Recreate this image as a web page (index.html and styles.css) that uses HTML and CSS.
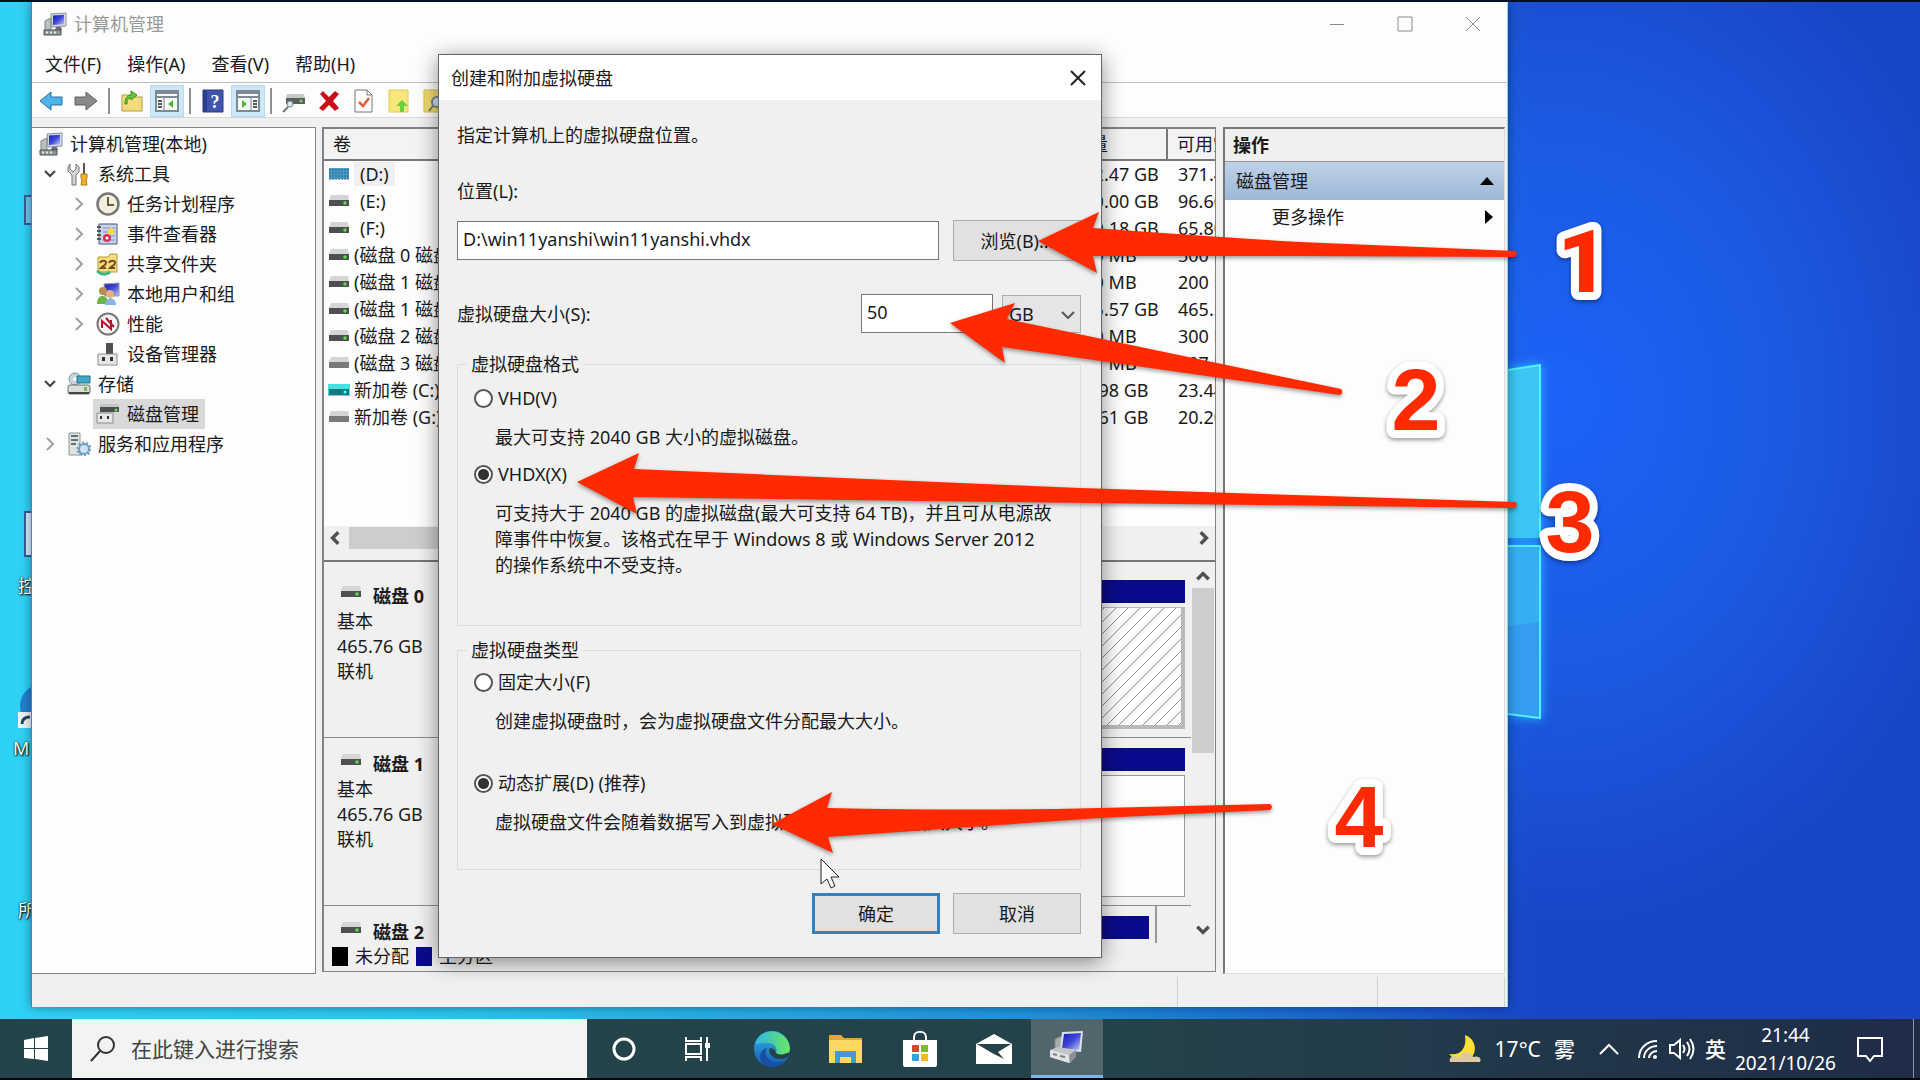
FILE: index.html
```html
<!DOCTYPE html>
<html lang="zh-CN">
<head>
  <title>计算机管理</title>
  <meta charset="UTF-8" />
  <link rel="stylesheet" href="styles.css">
</head>
<body>
  <!-- icon sprites -->
  <svg class="sprites" width="0" height="0">
    <defs>
      <linearGradient id="screen" x1="0" y1="0" x2="1" y2="1">
        <stop offset="0" stop-color="#1a1fb8" />
        <stop offset=".5" stop-color="#3f48d8" />
        <stop offset="1" stop-color="#c4cbf7" />
      </linearGradient>
      <linearGradient id="edgeBlue" x1="0" y1="0" x2="0" y2="1">
        <stop offset="0" stop-color="#35b8e6" />
        <stop offset="1" stop-color="#1058b0" />
      </linearGradient>
      <linearGradient id="edgeGreen" x1="0" y1="0" x2="1" y2="0">
        <stop offset="0" stop-color="#2fb4ea" />
        <stop offset="1" stop-color="#6be85c" />
      </linearGradient>
      <pattern id="hatch" width="12" height="12" patternUnits="userSpaceOnUse">
        <path d="M-2 14 14 -2M-2 2 2 -2M10 14 14 10" stroke="#8e8e8e" stroke-width="1" />
      </pattern>
    </defs>
    <symbol id="i-computer" viewBox="0 0 24 24">
      <path d="M2 9l6-3v12l-6 1z" fill="#b9bfc2" stroke="#7b8286" />
      <path d="M8 2l15-1v13l-14 1z" fill="#d9dce6" stroke="#8b90a3" />
      <path d="M10 3.500l11-.7v9.500l-11 .8z" fill="url(#screen)" />
      <path d="M13 15h5l1 3h-7z" fill="#6b7074" />
      <path d="M1 18h17v5H1z" fill="#8e9598" stroke="#4f5659" />
      <path d="M3 20.500h2m2 0h2m2 0h2" stroke="#e5e5e5" stroke-width="2" />
    </symbol>
    <symbol id="i-mmc" viewBox="0 0 36 36">
      <path d="M6 10l7-3v16l-7 2z" fill="#a9adaf" stroke="#7f8688" />
      <path d="M13 3l21-1-2 21-21-2z" fill="#dfe2ea" />
      <path d="M15 5l17-1-2 17-17-2z" fill="url(#screen)" />
      <path d="M15 19l5 1-2 5-4-1z" fill="#24323a" />
      <path d="M1 21l8-3 18 3v6l-6 7-20-6z" fill="#c3c6c8" />
      <path d="M1 21l19 5v8L1 28z" fill="#e1e3e4" />
      <path d="M20 26l7-5v6l-6 7z" fill="#8c9194" />
      <path d="M4 25l4 1m3 1 5 1" stroke="#7a8083" stroke-width="2" />
    </symbol>
    <symbol id="i-tools" viewBox="0 0 24 24">
      <path d="M3 2v5l3 3 3-3V2l3 3v5l-3 3v10H5V13L1 9V5z" fill="#d3d5d6" stroke="#777" />
      <path d="M16 1h2v11h-2z" fill="#555" />
      <path d="M14 12h6v4l-1 2 1 5h-6l1-5-1-2z" fill="#f0b32c" stroke="#b07a12" />
    </symbol>
    <symbol id="i-clock" viewBox="0 0 24 24">
      <circle cx="12" cy="12" r="10.500" fill="#f2efe0" stroke="#777" stroke-width="2.500" />
      <path d="M12 5v8h6" fill="none" stroke="#665c3d" stroke-width="2" />
    </symbol>
    <symbol id="i-events" viewBox="0 0 24 24">
      <path d="M3 2h18v20H3z" fill="#c9d3ea" stroke="#44567f" />
      <path d="M1 5h4M1 9h4M1 13h4M1 17h4" stroke="#555" stroke-width="2" />
      <path d="M7 6h12M7 10h12M7 14h12M7 18h12" stroke="#7c8fbd" />
      <path d="M15 4l4 8h-8z" fill="#ffd83a" />
      <circle cx="11" cy="16" r="4" fill="#d2315d" />
      <circle cx="11" cy="16" r="1.500" fill="#fff" />
    </symbol>
    <symbol id="i-share" viewBox="0 0 24 24">
      <path d="M2 5h10l2-3h7v18H2z" fill="#f4dd7b" stroke="#b99a32" />
      <path d="M4 11c1-3 6-3 6 0 0 2-3 3-5 5h5" fill="none" stroke="#7d4a22" stroke-width="2" />
      <path d="M13 11c1-3 6-3 6 0 0 2-3 3-5 5h5" fill="none" stroke="#7d4a22" stroke-width="2" />
      <path d="M1 19c4 4 9 4 13 1" fill="none" stroke="#3fb57e" stroke-width="3" />
    </symbol>
    <symbol id="i-users" viewBox="0 0 24 24">
      <path d="M8 2l15-1v13H9z" fill="url(#screen)" stroke="#999" />
      <circle cx="7" cy="9" r="4" fill="#b98a52" />
      <circle cx="14" cy="12" r="4" fill="#e0b27d" />
      <path d="M1 22c0-11 11-11 11 0z" fill="#6bb545" />
      <path d="M9 23c0-9 11-9 11 0z" fill="#89b4dd" />
    </symbol>
    <symbol id="i-perf" viewBox="0 0 24 24">
      <circle cx="12" cy="12" r="10.500" fill="#f4f4f4" stroke="#777" stroke-width="2" />
      <path d="M6 16V9l9 8V8M10 6l8 9" fill="none" stroke="#b4132c" stroke-width="2" />
    </symbol>
    <symbol id="i-device" viewBox="0 0 24 24">
      <path d="M10 1h7v11h-7z" fill="#4b4f52" />
      <path d="M2 12h19v11H2z" fill="#e4e6e7" stroke="#8b8f91" />
      <path d="M6 15h3v4H6zM14 15h3v4h-3z" fill="#333" />
    </symbol>
    <symbol id="i-storage" viewBox="0 0 24 24">
      <circle cx="8" cy="7" r="6" fill="#c6d3da" stroke="#84959d" />
      <circle cx="8" cy="7" r="2" fill="#fff" />
      <path d="M10 4h13v7H10z" fill="#43a6c9" stroke="#2b6f88" />
      <rect x="1" y="13" width="22" height="9" rx="2" fill="#d9dcdd" stroke="#6b7072" />
      <path d="M2 21h20" stroke="#444" stroke-width="2" />
      <path d="M17 15h3v4h-3z" fill="#6fbf4c" />
    </symbol>
    <symbol id="i-diskmgmt" viewBox="0 0 24 24">
      <path d="M4 4h19v6H4z" fill="#4b5150" />
      <path d="M4 2h18l1 3H4z" fill="#c2c6c6" />
      <circle cx="20" cy="8" r="1.500" fill="#6be04d" />
      <path d="M1 11h16v10H1z" fill="#e6e8e8" stroke="#8a8d8d" />
      <path d="M4 14h2v3H4zM11 14h2v3h-2z" fill="#333" />
    </symbol>
    <symbol id="i-services" viewBox="0 0 24 24">
      <path d="M2 1h11v22H2z" fill="#dfe3e3" stroke="#8d9698" />
      <path d="M4 4h7M4 8h7M4 12h5" stroke="#66706f" stroke-width="2" />
      <circle cx="17" cy="17" r="5" fill="#cfe0ee" stroke="#6f9cc0" stroke-width="2" />
      <circle cx="17" cy="17" r="6.500" fill="none" stroke="#6f9cc0" stroke-width="2" stroke-dasharray="2 2" />
    </symbol>
    <symbol id="i-drive" viewBox="0 0 22 14">
      <path d="M3 1h17l1 5H1z" fill="#d4d6d6" />
      <path d="M1 6h20v6H1z" fill="#4c504f" />
      <circle cx="17" cy="9" r="1.700" fill="#5fe04a" />
    </symbol>
    <symbol id="i-drive-off" viewBox="0 0 22 14">
      <path d="M3 1h17l1 5H1z" fill="#d4d6d6" />
      <path d="M1 6h20v6H1z" fill="#77797a" />
    </symbol>
    <symbol id="i-drive-sys" viewBox="0 0 22 14">
      <path d="M0 1h22v12H0z" fill="#49e0e4" />
      <path d="M1 6h20v6H1z" fill="#13797b" />
      <circle cx="17" cy="9" r="1.500" fill="#5ff" />
    </symbol>
    <symbol id="i-drive-sel" viewBox="0 0 22 14">
      <path d="M1 1h20v11H1z" fill="#4a9cc4" />
      <path d="M1 3h20M1 6h20M1 9h20M1 12h20" stroke="#1c5f8c" stroke-dasharray="2 1" />
    </symbol>
    <symbol id="i-down" viewBox="0 0 14 14"><path d="M2 4l5 5 5-5" fill="none" stroke="#404040" stroke-width="2" /></symbol>
    <symbol id="i-right" viewBox="0 0 14 14"><path d="M4 1l6 6-6 6" fill="none" stroke="#a0a0a0" stroke-width="2" /></symbol>
    <symbol id="i-panel" viewBox="0 0 24 24">
      <path d="M1 2h22v20H1z" fill="#f7f7f7" stroke="#7d8a92" stroke-width="2" />
      <path d="M1 4h22M1 8h22" stroke="#7d8a92" stroke-width="2" />
      <path d="M9 9v13" stroke="#7d8a92" />
      <path d="M3 12h4M3 15h4M3 18h4" stroke="#555" stroke-width="2" />
      <path d="M18 11v8l-5-4z" fill="#55b83a" />
    </symbol>
  </svg>

  <main class="desktop">
    <svg class="wallpaper-light" viewBox="0 0 34 356">
      <path d="M0 6 32 1v173H0z" fill="#3cc6f5" />
      <path d="M0 182h32v172L0 350z" fill="#36aef3" />
      <path d="M0 262 32 258v96L0 350z" fill="#359df0" />
      <path d="M0 6 32 1v173M0 182h32v172L0 350" fill="none" stroke="#4ff0fb" stroke-width="2" />
    </svg>
    <svg class="desk-pc" viewBox="0 0 48 30"><path d="M1 1h46v28H1z" fill="#6fc8ee" stroke="#3a5c9a" stroke-width="2" /></svg>
    <svg class="desk-panel" viewBox="0 0 48 46"><path d="M1 1h46v44H1z" fill="#d6ecf8" stroke="#3a5c9a" stroke-width="2" /></svg>
    <div class="desk-item desk-control">控</div>
    <svg class="desk-edge" viewBox="0 0 48 48"><circle cx="24" cy="24" r="22" fill="#2380d0" /><path d="M0 30h16v16H0z" fill="#f4f4f4" /><path d="M4 42c0-5 3-7 8-7" fill="none" stroke="#246" stroke-width="3" /></svg>
    <div class="desk-item desk-ms">M</div>
    <div class="desk-item desk-all">所</div>

    <section class="window">
      <header class="titlebar">
        <svg class="icon"><use href="#i-computer" /></svg>
        <span class="title">计算机管理</span>
        <button class="win-btn" aria-label="最小化"><svg width="16" height="16"><path d="M1 8.500h14" /></svg></button>
        <button class="win-btn" aria-label="最大化"><svg width="16" height="16"><path d="M1 1h14v14H1z" /></svg></button>
        <button class="win-btn" aria-label="关闭"><svg width="16" height="16"><path d="M1 1l14 14M15 1 1 15" /></svg></button>
      </header>
      <nav class="menubar">
        <button>文件(F)</button>
        <button>操作(A)</button>
        <button>查看(V)</button>
        <button>帮助(H)</button>
      </nav>
      <div class="toolbar">
        <button aria-label="后退"><svg class="icon" viewBox="0 0 24 24"><path d="M1 12 12 3v5h11v8H12v5z" fill="#4fb3ea" stroke="#2a6f9e" /></svg></button>
        <button aria-label="前进"><svg class="icon" viewBox="0 0 24 24"><path d="M23 12 12 3v5H1v8h11v5z" fill="#8a8a8a" stroke="#5e5e5e" /></svg></button>
        <i class="sep"></i>
        <button aria-label="向上一级"><svg class="icon" viewBox="0 0 24 24"><path d="M2 6h9l2 2h9v14H2z" fill="#f2dc7d" stroke="#b99b3d" /><path d="M5 15c0-7 3-9 6-9V2l6 4-6 5V9c-3 0-4 2-4 6z" fill="#66c93d" stroke="#3b8f22" /></svg></button>
        <button class="on" aria-label="显示控制台树"><svg class="icon"><use href="#i-panel" /></svg></button>
        <i class="sep"></i>
        <button aria-label="帮助"><svg class="icon" viewBox="0 0 24 24"><path d="M2 1h20v22H2z" fill="#3f55ac" stroke="#2b3a78" /><path d="M2 1h4v22H2z" fill="#2d3f8c" /><text x="14" y="19" text-anchor="middle" class="help-mark">?</text></svg></button>
        <button class="on" aria-label="显示操作窗格"><svg class="icon flip"><use href="#i-panel" /></svg></button>
        <i class="sep"></i>
        <button aria-label="刷新磁盘"><svg class="icon" viewBox="0 0 24 24"><path d="M5 5h17l1 4H4z" fill="#c5c9c9" /><path d="M4 9h19v6H4z" fill="#59605f" /><circle cx="19" cy="12" r="1.500" fill="#6be04d" /><circle cx="8" cy="15" r="3" fill="#d6e6ee" stroke="#7c8a90" /><path d="M6 18l-5 5" stroke="#777" stroke-width="2" /></svg></button>
        <button aria-label="删除"><svg class="icon" viewBox="0 0 24 24"><path d="M3 5l3-3 6 6 6-6 4 3-6 7 6 7-4 3-6-6-6 6-4-3 7-7z" fill="#c80f18" /></svg></button>
        <button aria-label="属性"><svg class="icon" viewBox="0 0 24 24"><path d="M3 1h12l5 5v17H3z" fill="#fdfdfd" stroke="#777" /><path d="M15 1v5h5" fill="none" stroke="#777" /><path d="M7 13l4 4 6-8" fill="none" stroke="#e0603a" stroke-width="2.500" /></svg></button>
        <button aria-label="附加"><svg class="icon" viewBox="0 0 24 24"><path d="M2 1h19v22H2z" fill="#f7e67a" stroke="#e2cc55" /><path d="M15 11l6 6h-4v6h-4v-6h-4z" fill="#6ad13c" /></svg></button>
        <button aria-label="查找"><svg class="icon" viewBox="0 0 24 24"><path d="M2 1h19v22H2z" fill="#f0dc6c" stroke="#d2bd4c" /><circle cx="15" cy="13" r="5" fill="#cfe4e6" stroke="#6f8588" stroke-width="2" /><path d="M11 17l-4 5" stroke="#777" stroke-width="2" /></svg></button>
      </div>

      <div class="workspace">
        <ul class="tree">
          <li class="root"><span class="node"><svg class="icon"><use href="#i-computer" /></svg>计算机管理(本地)</span></li>
          <li><svg class="chev"><use href="#i-down" /></svg><span class="node"><svg class="icon"><use href="#i-tools" /></svg>系统工具</span></li>
          <li class="sub"><svg class="chev"><use href="#i-right" /></svg><span class="node"><svg class="icon"><use href="#i-clock" /></svg>任务计划程序</span></li>
          <li class="sub"><svg class="chev"><use href="#i-right" /></svg><span class="node"><svg class="icon"><use href="#i-events" /></svg>事件查看器</span></li>
          <li class="sub"><svg class="chev"><use href="#i-right" /></svg><span class="node"><svg class="icon"><use href="#i-share" /></svg>共享文件夹</span></li>
          <li class="sub"><svg class="chev"><use href="#i-right" /></svg><span class="node"><svg class="icon"><use href="#i-users" /></svg>本地用户和组</span></li>
          <li class="sub"><svg class="chev"><use href="#i-right" /></svg><span class="node"><svg class="icon"><use href="#i-perf" /></svg>性能</span></li>
          <li class="sub"><svg class="chev"></svg><span class="node"><svg class="icon"><use href="#i-device" /></svg>设备管理器</span></li>
          <li><svg class="chev"><use href="#i-down" /></svg><span class="node"><svg class="icon"><use href="#i-storage" /></svg>存储</span></li>
          <li class="sub"><svg class="chev"></svg><span class="node selected"><svg class="icon"><use href="#i-diskmgmt" /></svg>磁盘管理</span></li>
          <li><svg class="chev"><use href="#i-right" /></svg><span class="node"><svg class="icon"><use href="#i-services" /></svg>服务和应用程序</span></li>
        </ul>

        <div class="center">
          <div class="volumes">
            <div class="volume-scroll">
              <table>
                <colgroup><col class="c-name"><col class="c-size"><col class="c-free"></colgroup>
                <thead>
                  <tr><th>卷</th><th>容量</th><th>可用空间</th></tr>
                </thead>
                <tbody>
                  <tr><td><svg class="drive"><use href="#i-drive-sel" /></svg><span class="letter current">(D:)</span></td><td>372.47 GB</td><td>371.40 GB</td></tr>
                  <tr><td><svg class="drive"><use href="#i-drive" /></svg><span class="letter">(E:)</span></td><td>100.00 GB</td><td>96.60 GB</td></tr>
                  <tr><td><svg class="drive"><use href="#i-drive" /></svg><span class="letter">(F:)</span></td><td>100.18 GB</td><td>65.80 GB</td></tr>
                  <tr><td><svg class="drive"><use href="#i-drive" /></svg>(磁盘 0 磁盘分区 1)</td><td>300 MB</td><td>300 MB</td></tr>
                  <tr><td><svg class="drive"><use href="#i-drive" /></svg>(磁盘 1 磁盘分区 1)</td><td>200 MB</td><td>200 MB</td></tr>
                  <tr><td><svg class="drive"><use href="#i-drive" /></svg>(磁盘 1 磁盘分区 2)</td><td>465.57 GB</td><td>465.57 GB</td></tr>
                  <tr><td><svg class="drive"><use href="#i-drive" /></svg>(磁盘 2 磁盘分区 1)</td><td>300 MB</td><td>300 MB</td></tr>
                  <tr><td><svg class="drive"><use href="#i-drive-off" /></svg>(磁盘 3 磁盘分区 1)</td><td>297 MB</td><td>297 MB</td></tr>
                  <tr><td><svg class="drive"><use href="#i-drive-sys" /></svg>新加卷 (C:)</td><td>99.98 GB</td><td>23.44 GB</td></tr>
                  <tr><td><svg class="drive"><use href="#i-drive-off" /></svg>新加卷 (G:)</td><td>28.61 GB</td><td>20.20 GB</td></tr>
                </tbody>
              </table>
            </div>
            <div class="hscroll">
              <svg class="arrow" viewBox="0 0 14 14"><path d="M9 2 4 7l5 5" /></svg>
              <div class="thumb"></div>
              <svg class="arrow" viewBox="0 0 14 14"><path d="M5 2l5 5-5 5" /></svg>
            </div>
          </div>
          <div class="disks">
            <div class="disk-rows">
              <div class="disk">
                <div class="disk-label"><b><svg class="drive"><use href="#i-drive" /></svg>磁盘 0</b><span>基本</span><span>465.76 GB</span><span>联机</span></div>
                <div class="parts"><div class="bar"></div><svg class="part hatched"><rect width="100%" height="100%" fill="url(#hatch)" /></svg></div>
              </div>
              <div class="disk">
                <div class="disk-label"><b><svg class="drive"><use href="#i-drive" /></svg>磁盘 1</b><span>基本</span><span>465.76 GB</span><span>联机</span></div>
                <div class="parts"><div class="bar"></div><div class="part"></div></div>
              </div>
              <div class="disk">
                <div class="disk-label"><b><svg class="drive"><use href="#i-drive" /></svg>磁盘 2</b></div>
                <div class="parts short"><div class="bar"></div></div>
              </div>
            </div>
            <div class="vscroll">
              <svg class="arrow" viewBox="0 0 14 14"><path d="M2 9l5-5 5 5" /></svg>
              <div class="thumb"></div>
              <svg class="arrow" viewBox="0 0 14 14"><path d="M2 5l5 5 5-5" /></svg>
            </div>
          </div>
          <div class="legend">
            <i class="swatch black"></i>未分配
            <i class="swatch blue"></i>主分区
          </div>
        </div>

        <aside class="actions">
          <h2>操作</h2>
          <div class="action-group">磁盘管理<svg width="14" height="8"><path d="M7 0l7 8H0z" /></svg></div>
          <div class="action-more">更多操作<svg width="8" height="14"><path d="M0 0l8 7-8 7z" /></svg></div>
        </aside>
      </div>
      <footer class="statusbar"><i></i><i></i><i></i></footer>
    </section>

    <form class="dialog">
      <header class="dialog-title">
        创建和附加虚拟硬盘
        <button type="button" class="dialog-close" aria-label="关闭"><svg width="16" height="16"><path d="M1 1l14 14M15 1 1 15" /></svg></button>
      </header>
      <div class="dialog-body">
        <p class="intro">指定计算机上的虚拟硬盘位置。</p>
        <label class="path-label" for="path">位置(L):</label>
        <div class="path-row">
          <input type="text" id="path" value="D:\win11yanshi\win11yanshi.vhdx">
          <button type="button" class="btn">浏览(B)...</button>
        </div>
        <div class="size-row">
          <label for="size">虚拟硬盘大小(S):</label>
          <input type="text" id="size" value="50">
          <span class="unit">
            <select aria-label="单位"><option>GB</option></select>
            <svg width="14" height="8"><path d="M1 1l6 6 6-6" /></svg>
          </span>
        </div>
        <fieldset class="format">
          <legend>虚拟硬盘格式</legend>
          <label><input type="radio" name="format">VHD(V)</label>
          <p>最大可支持 2040 GB 大小的虚拟磁盘。</p>
          <label><input type="radio" name="format" checked>VHDX(X)</label>
          <p>可支持大于 2040 GB 的虚拟磁盘(最大可支持 64 TB)，并且可从电源故<br>障事件中恢复。该格式在早于 Windows 8 或 Windows Server 2012<br>的操作系统中不受支持。</p>
        </fieldset>
        <fieldset class="type">
          <legend>虚拟硬盘类型</legend>
          <label><input type="radio" name="type">固定大小(F)</label>
          <p>创建虚拟硬盘时，会为虚拟硬盘文件分配最大大小。</p>
          <label><input type="radio" name="type" checked>动态扩展(D) (推荐)</label>
          <p>虚拟硬盘文件会随着数据写入到虚拟硬盘而增长至其最大大小。</p>
        </fieldset>
        <div class="dialog-buttons">
          <button type="button" class="btn default">确定</button>
          <button type="button" class="btn">取消</button>
        </div>
      </div>
    </form>
  </main>

  <footer class="taskbar">
    <button class="start" aria-label="开始"><svg width="26" height="26" viewBox="0 0 26 26"><path d="M1 4l10-2v10H1zM12 2l13-2v12H12zM1 13h10v10L1 22zM12 13h13v12l-13-2z" fill="#fff" /></svg></button>
    <div class="search">
      <svg width="26" height="26" viewBox="0 0 26 26"><circle cx="16" cy="9" r="8" /><path d="M10 15 1 25" /></svg>
      <input type="text" placeholder="在此键入进行搜索" aria-label="搜索">
    </div>
    <button class="app" aria-label="Cortana"><svg width="26" height="26"><circle cx="13" cy="13" r="10" fill="none" stroke="#fff" stroke-width="3" /></svg></button>
    <button class="app" aria-label="任务视图"><svg width="26" height="26" viewBox="0 0 26 26"><path d="M1 1v4h15V1M1 25v-4h15v4M1 8h15v10H1zM22 1v24" fill="none" stroke="#fff" stroke-width="2" /><path d="M20 7h5v5h-5z" fill="#fff" /></svg></button>
    <button class="app" aria-label="Edge"><svg width="38" height="38" viewBox="0 0 38 38"><circle cx="19" cy="19" r="18" fill="url(#edgeBlue)" /><path d="M2 14C6-3 34-3 37 18c0 8-10 9-14 5 2-5-2-10-8-10-6-1-10 1-13 1z" fill="url(#edgeGreen)" /><path d="M14 18c-5 9 5 18 18 13-5 6-14 8-21 4-6-6-5-15 3-17z" fill="#1a4ea5" /><path d="M17 18c-3 5 3 12 12 11 3 0 6-2 7-4 1-6-5 3-13-2-1-2 0-4-6-5z" fill="#24424a" /></svg></button>
    <button class="app" aria-label="文件资源管理器"><svg width="34" height="30" viewBox="0 0 34 30"><path d="M0 1h12l3 3h18v25H0z" fill="#e5a82f" /><path d="M0 6h33v23H0z" fill="#fbd866" /><path d="M6 29V17h21v12h-5v-6H11v6z" fill="#3f9bdc" /></svg></button>
    <button class="app" aria-label="Microsoft Store"><svg width="36" height="38" viewBox="0 0 36 38"><path d="M12 11V7c0-7 12-7 12 0v4" fill="none" stroke="#fff" stroke-width="2" /><path d="M1 10h34v25q0 2-2 2H3q-2 0-2-2z" fill="#fff" /><path d="M10 15h7v7h-7z" fill="#d8442c" /><path d="M19 15h7v7h-7z" fill="#7fba2c" /><path d="M10 24h7v7h-7z" fill="#2fa3dd" /><path d="M19 24h7v7h-7z" fill="#f5b62c" /></svg></button>
    <button class="app" aria-label="邮件"><svg width="36" height="30" viewBox="0 0 36 30"><path d="M0 10 18 0l18 10v20H0z" fill="#fff" /><path d="M1 10h34l-13 8 6 7-12-6z" fill="#24424a" /></svg></button>
    <button class="app running" aria-label="计算机管理"><svg width="36" height="36"><use href="#i-mmc" /></svg></button>
    <div class="tray">
      <svg width="34" height="30" viewBox="0 0 34 30"><path d="M17 1c12 4 14 21 1 26H8l-7-7c12 2 18-6 16-19z" fill="#ffdf35" /><path d="M2 28c-2-6 6-7 9-4 3-8 13-6 14-1 6-2 9 2 7 5z" fill="#dcc9a0" /></svg>
      <span class="weather">17°C</span>
      <span class="weather-text">雾</span>
      <svg class="line caret" width="20" height="12"><path d="M1 11l9-9 9 9" /></svg>
      <svg class="line wifi" width="22" height="22" viewBox="0 0 22 22"><path d="M2 20C2 10 10 3 20 3M7 20c0-7 6-12 13-12M12 20c0-4 4-7 8-7" /><circle cx="18" cy="19" r="2" fill="#fff" /></svg>
      <svg class="line sound" width="26" height="22" viewBox="0 0 26 22"><path d="M1 7h4l6-5v18l-6-5H1zM14 7q3 4 0 8M18 4q5 7 0 14M21 1q7 10 0 20" /></svg>
      <span class="ime">英</span>
      <time class="clock">21:44<br>2021/10/26</time>
      <svg class="line notice" width="26" height="26" viewBox="0 0 26 26"><path d="M1 2h24v18h-8l-4 5-4-5H1z" /></svg>
    </div>
  </footer>

  <!-- step markers drawn over everything -->
  <svg class="marks" width="1920" height="1080">
    <path class="cursor" d="M821 859v25l6-5 4 9 4-2-4-9h8z" />
    <g class="arrows">
      <path d="M1038 241 1099 212 1093 228Q1200 236 1300 242L1515 251Q1519 254 1515 257L1300 256 1093 256 1097 273z" />
      <path d="M950 323 1015 303 1007 319 1341 389Q1344 393 1340 395L1002 347 1005 363z" />
      <path d="M577 482 639 453 634 469 1080 488 1515 502Q1519 505 1515 508L1000 502 633 497 637 514z" />
      <path d="M772 824 832 792 827 808Q980 811 1100 808L1270 804Q1274 807 1270 810L1100 818 828 837 833 853z" />
    </g>
    <g class="numbers">
      <text x="1583" y="292" class="one">1</text>
      <text x="1416" y="430">2</text>
      <text x="1570" y="552">3</text>
      <text x="1359" y="847">4</text>
    </g>
  </svg>
</body>
</html>
```
FILE: styles.css
```css
* {
  box-sizing: border-box;
}
body {
  margin: 0;
  height: 100vh;
  display: flex;
  flex-direction: column;
  overflow: hidden;
  border-top: 2px solid #041022;
  font: 18px/26px "Noto Sans", "Noto Sans CJK SC", sans-serif;
  color: #1a1a1a;
}
button, input, select {
  font: inherit;
  color: inherit;
}
button {
  padding: 0;
  border: 0;
  background: none;
}
button svg {
  display: block;
  margin: auto;
}
p, ul, h2 {
  margin: 0;
  padding: 0;
}
svg {
  flex: none;
}
.sprites {
  position: absolute;
}
.icon {
  width: 24px;
  height: 24px;
}

/* desktop */
.desktop {
  position: relative;
  flex: 1;
  overflow: hidden;
  background:
    linear-gradient(90deg, rgba(47,210,245,1) 0, rgba(42,195,235,1) 25%, rgba(30,150,220,.9) 55%, rgba(27,110,215,0) 80%),
    radial-gradient(ellipse 420px 520px at 1560px 400px, #1d62f8 0, #1b5be2 50%, #1945c8 100%);
}
.wallpaper-light {
  position: absolute;
  left: 1508px;
  top: 362px;
  width: 34px;
  height: 356px;
  filter: drop-shadow(0 0 6px #2ab4ff);
}
.desk-item {
  position: absolute;
  color: #fff;
  text-shadow: 1px 1px 2px #000, 0 0 2px #000;
}
.desk-control {
  left: 18px;
  top: 571px;
}
.desk-ms {
  left: 13px;
  top: 733px;
}
.desk-all {
  left: 18px;
  top: 895px;
}
.desk-pc, .desk-panel {
  position: absolute;
  left: 24px;
  width: 48px;
}
.desk-pc {
  top: 193px;
  height: 30px;
}
.desk-panel {
  top: 509px;
  height: 46px;
}
.desk-edge {
  position: absolute;
  left: 18px;
  top: 680px;
  width: 48px;
  height: 48px;
}

/* main window */
.window {
  position: absolute;
  left: 31px;
  top: 0;
  right: 412px;
  bottom: 12px;
  display: flex;
  flex-direction: column;
  background: #fdfdfd;
  border-left: 1px solid #5a78c0;
  border-right: 1px solid #8fd8d8;
  box-shadow: 0 0 10px rgba(0,0,0,.4);
}
.titlebar {
  display: flex;
  align-items: center;
  height: 43px;
  padding-left: 11px;
}
.title {
  flex: 1;
  margin-left: 7px;
  color: #999;
}
.win-btn {
  width: 68px;
  height: 43px;
}
.win-btn path {
  fill: none;
  stroke: #8a8a8a;
}
.menubar {
  display: flex;
  gap: 26px;
  height: 38px;
  padding: 2px 0 0 13px;
  border-bottom: 1px solid #bfbfbf;
}
.menubar button {
  height: 34px;
}
.toolbar {
  display: flex;
  align-items: center;
  gap: 1px;
  height: 35px;
  padding: 2px 0 0 2px;
  border-bottom: 1px solid #d9d9d9;
}
.toolbar button {
  width: 34px;
  height: 32px;
}
.toolbar .on {
  background: #cce8f8;
  border: 1px solid #b4daf0;
}
.flip {
  transform: scaleX(-1);
}
.help-mark {
  font: bold 18px "Liberation Serif", serif;
  fill: #fff;
}
.sep {
  width: 2px;
  height: 26px;
  margin: 0 4px;
  background: #8f8f8f;
}

.workspace {
  flex: 1;
  min-height: 0;
  display: flex;
  padding: 9px 2px 0 0;
  background: #f0f0f0;
}
.tree {
  width: 284px;
  padding-top: 1px;
  background: #fdfdfd;
  border: 1px solid #82858c;
  border-left: 0;
  list-style: none;
}
.tree li {
  display: flex;
  align-items: center;
  height: 30px;
  padding-left: 5px;
}
.tree .root {
  padding-left: 4px;
}
.tree .sub {
  padding-left: 34px;
}
.chev {
  width: 14px;
  height: 14px;
  margin: 0 7px 0 6px;
}
.node {
  display: flex;
  align-items: center;
  gap: 7px;
  height: 30px;
  padding: 0 6px 0 3px;
}
.node.selected {
  background: #d9d9d9;
}

/* volume list and disk map */
.center {
  flex: 1;
  min-width: 0;
  display: flex;
  flex-direction: column;
  margin: 0 7px 2px 6px;
  border: 1px solid #828282;
  border-width: 2px 1px 1px 2px;
}
.volumes {
  height: 433px;
  border-bottom: 2px solid #777;
}
.volume-scroll {
  height: 397px;
  overflow: hidden;
  background: #fdfdfd;
}
.volumes table {
  width: 963px;
  table-layout: fixed;
  border-collapse: collapse;
}
.c-name {
  width: 738px;
}
.c-size {
  width: 105px;
}
.volumes th {
  height: 31px;
  padding: 0 9px;
  text-align: left;
  font-weight: normal;
  background: #f3f3f3;
  border-right: 2px solid #777;
  border-bottom: 2px solid #777;
}
.volumes td {
  height: 27px;
  padding: 0 11px;
  white-space: nowrap;
}
.volumes td:first-child {
  padding-left: 4px;
}
.drive {
  width: 22px;
  height: 14px;
  margin-right: 4px;
}
.letter {
  padding: 0 6px;
}
.current {
  background: #f0f0f0;
}
.hscroll {
  display: flex;
  align-items: center;
  height: 23px;
  padding: 0 4px;
}
.hscroll .thumb {
  width: 600px;
  height: 22px;
  margin: 0 auto 0 5px;
  background: #cdcdcd;
}
.arrow {
  width: 16px;
  height: 16px;
}
.arrow path {
  fill: none;
  stroke: #505050;
  stroke-width: 3;
}
.disks {
  flex: 1;
  min-height: 0;
  display: flex;
  overflow: hidden;
}
.disk-rows {
  flex: 1;
  padding-top: 8px;
}
.disk {
  display: flex;
  height: 168px;
  border-bottom: 1px solid #8c8c8c;
}
.disk-label {
  width: 140px;
  padding: 14px 0 0 13px;
  line-height: 25px;
}
.disk-label b, .disk-label span {
  display: block;
}
.disk-label b .drive {
  margin: 0 11px 0 3px;
  vertical-align: 4px;
}
.parts {
  flex: 1;
  display: flex;
  flex-direction: column;
  gap: 4px;
  padding: 10px 6px 8px 0;
}
.parts.short {
  flex: none;
  width: 693px;
  margin-right: 34px;
  border-right: 2px solid #999;
}
.bar {
  flex: none;
  height: 23px;
  background: #0a0a8c;
}
.part {
  flex: 1;
  width: 100%;
  background: #fdfdfd;
  border: 1px solid #999;
}
.hatched {
  border: 4px solid #b9b9b9;
  border-top-width: 1px;
}
.vscroll {
  display: flex;
  flex-direction: column;
  align-items: center;
  width: 24px;
  padding: 7px 0 6px;
  background: #f0f0f0;
}
.vscroll .thumb {
  width: 22px;
  height: 165px;
  margin: 3px 0 auto;
  background: #cdcdcd;
}
.legend {
  display: flex;
  align-items: center;
  gap: 7px;
  height: 28px;
  padding: 0 0 2px 8px;
}
.swatch {
  width: 16px;
  height: 19px;
}
.black {
  background: #000;
}
.blue {
  background: #0a0a8c;
}

/* actions pane */
.actions {
  width: 282px;
  background: #fdfdfd;
  border: 1px solid #ddd;
  border-top: 2px solid #777;
  border-left: 2px solid #777;
}
.actions h2 {
  height: 33px;
  padding-left: 8px;
  font-size: 18px;
  line-height: 32px;
  background: #f0f0f0;
  border-bottom: 1px solid #999;
}
.action-group, .action-more {
  display: flex;
  align-items: center;
  justify-content: space-between;
}
.action-group {
  height: 38px;
  padding: 0 10px 0 11px;
  background: linear-gradient(#bfd2e8, #9db8d8);
}
.action-more {
  height: 34px;
  padding: 0 11px 0 47px;
}
.statusbar {
  display: flex;
  justify-content: flex-end;
  height: 33px;
  padding: 3px 2px 0 0;
  background: #f0f0f0;
}
.statusbar i {
  width: 200px;
  border-left: 1px solid #d0d0d0;
}
.statusbar i:nth-child(2) {
  width: 127px;
}
.statusbar i:last-child {
  width: 1px;
}

/* dialog */
.dialog {
  position: absolute;
  left: 438px;
  top: 52px;
  width: 664px;
  background: #f0f0f0;
  border: 1px solid #666;
  box-shadow: 0 4px 20px rgba(0,0,0,.45);
}
.dialog-title {
  display: flex;
  align-items: center;
  justify-content: space-between;
  height: 45px;
  padding-left: 12px;
  background: #fff;
}
.dialog-close {
  width: 46px;
  height: 45px;
}
.dialog-close path {
  stroke: #222;
  stroke-width: 2;
}
.dialog-body {
  padding: 22px 20px 23px 18px;
}
.path-label {
  display: block;
  margin-top: 30px;
}
.path-row, .size-row {
  display: flex;
  align-items: center;
}
.path-row {
  justify-content: space-between;
  margin-top: 16px;
}
.dialog input[type="text"] {
  width: 482px;
  height: 39px;
  padding: 0 5px 3px;
  background: #fff;
  border: 1px solid #777;
}
.btn {
  width: 128px;
  height: 41px;
  background: #e1e1e1;
  border: 1px solid #adadad;
}
.btn.default {
  border: 3px solid #2d83c6;
}
.size-row {
  margin-top: 33px;
}
.size-row label {
  flex: 1;
}
.dialog .size-row input {
  width: 132px;
}
.unit {
  position: relative;
  margin-left: 9px;
}
.unit select {
  display: block;
  width: 79px;
  height: 38px;
  padding: 0 6px;
  appearance: none;
  background: #e5e5e5;
  border: 1px solid #adadad;
  border-radius: 0;
}
.unit svg {
  position: absolute;
  right: 6px;
  top: 16px;
}
.unit path {
  fill: none;
  stroke: #555;
  stroke-width: 2;
}
fieldset {
  margin: 0;
  padding: 8px 0 0 16px;
  border: 1px solid #dcdcdc;
}
legend {
  margin-left: -7px;
  padding: 0 4px;
}
fieldset label {
  display: flex;
  align-items: center;
  gap: 5px;
}
fieldset p {
  padding-left: 21px;
}
fieldset input {
  appearance: none;
  width: 19px;
  height: 19px;
  margin: 0;
  background: #fff;
  border: 2px solid #555;
  border-radius: 50%;
}
fieldset input:checked {
  background: radial-gradient(circle, #333 0 5px, #fff 6px);
}
.format {
  height: 275px;
  margin-top: 18px;
}
.format p {
  margin: 13px 0 11px;
}
.type {
  height: 233px;
  margin-top: 11px;
  padding-top: 6px;
}
.type p {
  margin: 13px 0 36px;
}
.dialog-buttons {
  display: flex;
  justify-content: flex-end;
  gap: 13px;
  margin-top: 23px;
}

/* taskbar */
.taskbar {
  display: flex;
  align-items: center;
  height: 61px;
  border-bottom: 2px solid #04080e;
  background: linear-gradient(90deg, #24434a, #24424a 60%, #1f2c48);
  color: #fff;
}
.start {
  width: 72px;
}
.search {
  display: flex;
  align-items: center;
  gap: 13px;
  width: 515px;
  height: 59px;
  padding-left: 18px;
  background: #f2f3f3;
}
.search svg {
  fill: none;
  stroke: #333;
  stroke-width: 2;
}
.search input {
  flex: 1;
  border: 0;
  outline: 0;
  background: none;
  font-size: 21px;
}
.search input::placeholder {
  color: #444;
}
.app {
  width: 74px;
  height: 59px;
}
.running {
  width: 72px;
  background: #51666c;
  border-bottom: 3px solid #7ab8e6;
}
.tray {
  display: flex;
  align-items: center;
  height: 59px;
  margin-left: auto;
  margin-right: 6px;
  padding-right: 30px;
  border-right: 1px solid #8a94a8;
}
.weather, .weather-text, .ime {
  font-size: 21px;
}
.weather {
  margin: 0 13px;
}
.weather-text, .ime {
  font-weight: 500;
}
.line path {
  fill: none;
  stroke: #fff;
  stroke-width: 2;
}
.caret {
  margin: 0 18px 0 24px;
}
.sound {
  margin: 0 10px;
}
.clock {
  margin: 0 21px 0 9px;
  text-align: center;
  font-size: 19px;
  line-height: 28px;
}

/* arrows, numbers, pointer */
.marks {
  position: absolute;
  left: 0;
  top: 0;
  pointer-events: none;
}
.cursor {
  fill: #fff;
  stroke: #222;
}
.arrows, .numbers {
  fill: #ff2a00;
  filter: drop-shadow(0 2px 2px rgba(0,0,0,.4));
}
.numbers text {
  font: bold 88px "Liberation Sans", sans-serif;
  text-anchor: middle;
  stroke: #fff;
  stroke-width: 16px;
  stroke-linejoin: round;
  paint-order: stroke;
}
.numbers .one {
  font-family: Roboto, sans-serif;
  font-weight: 900;
}
```
